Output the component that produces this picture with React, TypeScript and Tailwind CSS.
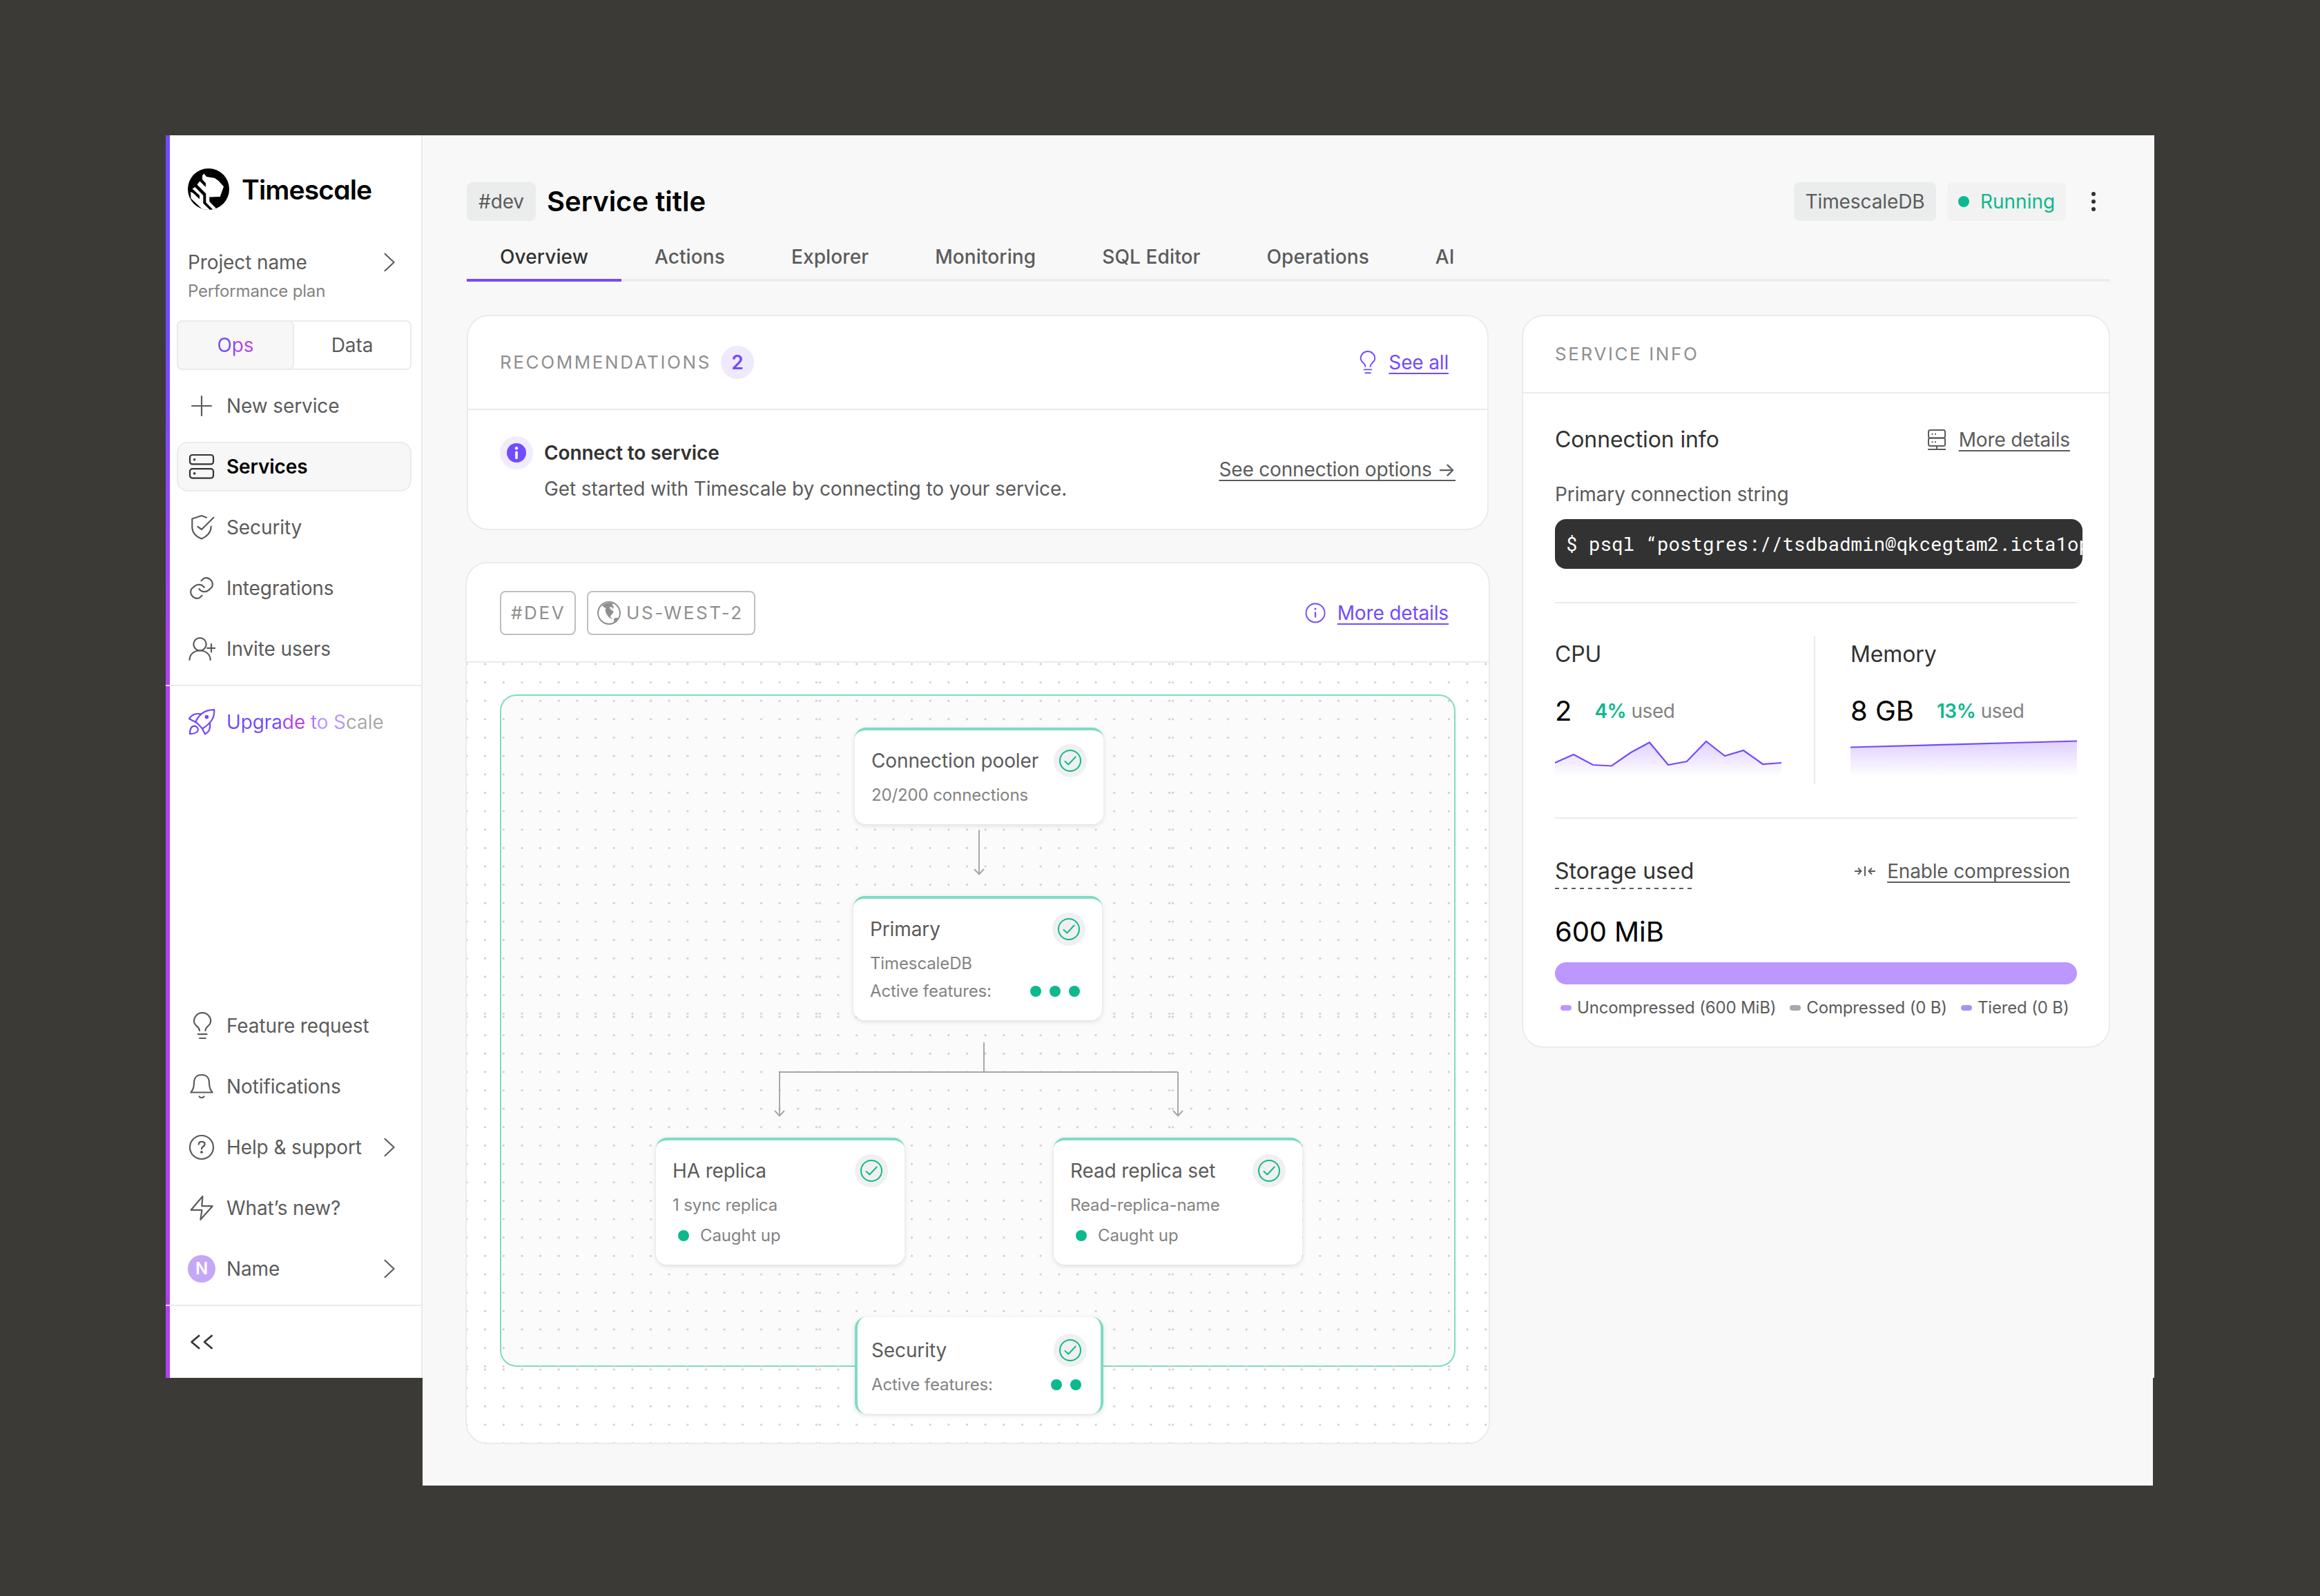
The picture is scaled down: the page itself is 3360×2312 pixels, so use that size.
import React from 'react'

type IconProps = { className?: string }

const Svg: React.FC<{ className?: string; children: React.ReactNode }> = ({ className = 'h-10 w-10', children }) => (
  <svg
    viewBox="0 0 40 40"
    fill="none"
    stroke="currentColor"
    strokeWidth={2.2}
    strokeLinecap="round"
    strokeLinejoin="round"
    className={`shrink-0 ${className}`}
  >
    {children}
  </svg>
)

const PlusIcon = () => (
  <Svg>
    <path d="M6 20h28M20 6v28" />
  </Svg>
)

const ServerIcon = () => (
  <Svg className="h-10 w-10 text-[#333333]">
    <rect x="3" y="3" width="34" height="13.4" rx="3.5" />
    <rect x="3" y="23.2" width="34" height="13.4" rx="3.5" />
    <circle cx="9.6" cy="9.7" r="0.7" />
    <circle cx="9.6" cy="29.9" r="0.7" />
  </Svg>
)

const ShieldIcon = () => (
  <Svg>
    <path d="M27 5.7L20 3 6.3 7.5V19c0 8.5 6 14.5 13.7 17.5C27.7 33.5 33.7 27 33.7 18.500" />
    <path d="M14.5 19l5.5 4L37.3 5.7" />
  </Svg>
)

const LinkIcon = () => (
  <Svg>
    <path d="M19.5 9.3L23 6A9.3 9.3 0 0 1 34.8 18.7L30.5 22.6A9.4 9.4 0 0 1 16.3 21.2" />
    <path d="M19.5 9.3L23 6A9.3 9.3 0 0 1 34.8 18.7L30.5 22.6A9.4 9.4 0 0 1 16.3 21.2" transform="rotate(180 20 20)" />
  </Svg>
)

const UserPlusIcon = () => (
  <Svg>
    <circle cx="17.5" cy="13.3" r="9.2" />
    <path d="M2.5 36C2.5 28 9 22.5 17.5 22.5S32.7 28 32.7 36" />
    <path d="M34 13v11.5M28.2 18.8h11" />
  </Svg>
)

const RocketIcon = () => (
  <Svg className="h-10 w-10 text-[#7148fb]">
    <path d="M11.3 19.3C15 12.5 21 2.2 38.3 2.2C38.8 13 34.5 21 21.2 29.5Z" />
    <path d="M2 15.2L12 20.5M2 15.2C6.5 8.5 11.5 7.2 19.7 8.4" />
    <path d="M20.8 29.3L25 37.5C31.8 34 33.2 28.5 32 21" />
    <circle cx="27.4" cy="12.6" r="1.7" fill="currentColor" />
    <path d="M3 37.2C3 30 4.8 25.6 9.8 25.6C12.4 26.2 14.8 28.5 15 31C14.5 35.6 10 37 3 37.2Z" />
  </Svg>
)

const BulbIcon: React.FC<IconProps> = ({ className }) => (
  <Svg className={className}>
    <path d="M17 27C17 20.5 9 20.5 9 13.2A12.1 12 0 0 1 33.2 13.2C33.2 20.5 25.4 20.5 25.4 27" />
    <path d="M14.8 32.2h12.8M17 38h8.6" />
  </Svg>
)

const BellIcon = () => (
  <Svg>
    <path d="M4.3 28.5C8.2 24.5 9 20 9 14.5C9 7 13.5 3 20 3S31 7 31 14.5C31 20 31.8 24.5 35.7 28.5Z" />
    <path d="M16.5 34.3c1.8 2.6 5.2 2.6 7 0" />
  </Svg>
)

const HelpIcon = () => (
  <Svg>
    <circle cx="20" cy="20" r="17" />
    <path d="M15.8 15.5C16 10.8 24.6 10.6 24.6 15.6C24.6 18.8 20 18.7 20 22.2" strokeWidth={2.4} />
    <circle cx="20" cy="27" r="0.9" fill="currentColor" />
  </Svg>
)

const BoltIcon = () => (
  <Svg>
    <path d="M21.4 3L4.7 22.8H20.4L18.4 36.8L35.7 17.2H20.3Z" />
  </Svg>
)

const CollapseIcon = () => (
  <Svg className="h-10 w-10 text-[#333333]">
    <path d="M17 10.2L5.5 20L17 29.8M35.5 10.2L24 20L35.5 29.8" strokeWidth={2.6} strokeLinecap="butt" />
  </Svg>
)

const ChevronIcon: React.FC<IconProps> = ({ className = '' }) => (
  <svg
    viewBox="0 0 16 28"
    fill="none"
    stroke="currentColor"
    strokeWidth={2.1}
    strokeLinecap="round"
    strokeLinejoin="round"
    className={`ml-auto h-7 w-4 ${className}`}
  >
    <path d="M1.5 1.8L14.6 14L1.5 26.2" />
  </svg>
)

const Logo = () => (
  <svg viewBox="0 0 60 60" className="h-[60px] w-[60px]">
    <defs>
      <clipPath id="logo-clip">
        <circle cx="30" cy="30" r="30" />
      </clipPath>
    </defs>
    <g clipPath="url(#logo-clip)">
      <rect width="60" height="60" fill="#000" />
      <path
        fill="#fff"
        d="M21 10.5L23.3 7.6L27 12L39 14L44.5 18L52 26.3L46.7 41L31.3 41.6V48L43 60H36.7L26.3 49.3V36.5L13.5 23.5L17.3 18.5L26 27V21.5L21 16Z"
      />
      <path fill="#fff" d="M10.5 27L22.3 39V50.5L33 61H23L4.5 43.5L4 34L7.5 35.5L17 44.5V39L6.5 29.5Z" />
    </g>
  </svg>
)

const GlobeIcon = () => (
  <svg viewBox="0 0 34 34" className="h-[34px] w-[34px] text-[#8f8f8f]">
    <circle cx="17" cy="17" r="15.9" fill="none" stroke="currentColor" strokeWidth={2} />
    <path
      fill="currentColor"
      d="M7 6C11 2.5 18 1 23.5 3.2L21.5 5L24 8L22.5 11L20.5 8L17.5 9L19.5 12L22.5 13.5L23.5 16L21.5 18.5L19 21.5L20 24L22.500 25L20.500 25.5L16.5 23L13 18L11.5 13L12.5 10L9.500 8.5Z"
    />
    <path fill="currentColor" d="M23.5 26L27 23.5L31 25L27 30L23 32L24.5 28.5Z" />
  </svg>
)

const InfoCircleIcon = () => (
  <svg viewBox="0 0 32 32" fill="none" stroke="currentColor" strokeWidth={1.9} className="h-8 w-8">
    <circle cx="16" cy="16" r="13.5" />
    <path d="M16 14.5v8" strokeWidth={2.2} />
    <circle cx="16" cy="10" r="1.5" fill="currentColor" stroke="none" />
  </svg>
)

const HostIcon = () => (
  <svg viewBox="0 0 28 32" fill="none" stroke="currentColor" strokeWidth={2} className="h-8 w-7">
    <rect x="2" y="2" width="24" height="11.5" rx="2.5" />
    <rect x="2" y="13.5" width="24" height="11.5" rx="2.5" />
    <path d="M14 25v5M1 30h26" />
    <path d="M6.5 7.7h2M11 7.7h2M6.5 19.2h2M11 19.2h2" />
  </svg>
)

const CompressIcon = () => (
  <svg viewBox="0 0 32 16" fill="none" stroke="currentColor" strokeWidth={2} className="h-4 w-8">
    <path d="M1 8h9M6 3.5L10.5 8L6 12.5M16 1v14M31 8h-9M26 3.5L21.5 8L26 12.5" />
  </svg>
)

const StatusCheck = () => (
  <div className="flex h-12 w-12 items-center justify-center rounded-full bg-[#f0f0f0]">
    <svg viewBox="0 0 32 32" fill="none" stroke="#0cb98d" className="h-8 w-8">
      <circle cx="16" cy="16" r="15" strokeWidth={2} />
      <path d="M8.5 17L13.4 21.5L23.7 10.5" strokeWidth={1.9} strokeLinecap="round" strokeLinejoin="round" />
    </svg>
  </div>
)

const Dot = () => <span className="h-4 w-4 rounded-full bg-[#0cb98d]" />

interface NavItemProps {
  icon: React.ReactNode
  label: string
  active?: boolean
  hasMenu?: boolean
}

const NavItem: React.FC<NavItemProps> = ({ icon, label, active, hasMenu }) => (
  <div
    className={`flex h-[72px] items-center gap-4 pl-[14px] ${
      active ? 'rounded-2xl border-2 border-[#ebebeb] bg-[#f7f7f7] font-semibold text-black' : 'border-2 border-transparent text-[#5b5b5b]'
    }`}
  >
    {icon}
    <span>{label}</span>
    {hasMenu && <ChevronIcon className="mr-[22px]" />}
  </div>
)

const Sidebar = () => (
  <aside className="h-[1800px] w-[372px] shrink-0 bg-[linear-gradient(180deg,#724bff_0px,#724bff_300px,#b143ee_790px,#b143ee_100%)] pl-1.5">
    <div className="flex h-full flex-col border-r-2 border-[#ebebeb] bg-white pt-12">
      <div className="flex h-[60px] items-center gap-[18px] pl-[26px]">
        <Logo />
        <span className="text-[39px] font-semibold tracking-[-0.85px] text-black [font-feature-settings:'cv11']">Timescale</span>
      </div>

      <div className="mt-14 flex h-10 items-center pl-[26px] pr-[14px] text-[#5b5b5b]">
        Project name
        <ChevronIcon className="mr-6" />
      </div>
      <div className="flex h-11 items-center pl-[26px] text-2xl tracking-[-0.17px] text-[#838383]">Performance plan</div>

      <div className="ml-[10px] mr-[14px] mt-5 flex h-[72px] rounded-lg border-2 border-[#ebebeb]">
        <div className="-my-0.5 -ml-0.5 flex w-[170px] items-center justify-center rounded-lg border-2 border-[#ebebeb] bg-[#f7f7f7]">
          <span className="bg-[linear-gradient(90deg,#724bff_35%,#b143ee_60%)] bg-clip-text leading-10 text-transparent">Ops</span>
        </div>
        <div className="flex flex-1 items-center justify-center text-[#5b5b5b]">Data</div>
      </div>

      <nav className="ml-[10px] mr-[14px] mt-4 flex flex-col gap-4">
        <NavItem icon={<PlusIcon />} label="New service" />
        <NavItem icon={<ServerIcon />} label="Services" active />
        <NavItem icon={<ShieldIcon />} label="Security" />
        <NavItem icon={<LinkIcon />} label="Integrations" />
        <NavItem icon={<UserPlusIcon />} label="Invite users" />
      </nav>

      <div className="-ml-1.5 mt-4 h-0.5 shrink-0 bg-[#ebebeb]" />

      <div className="ml-[10px] mt-4 flex h-[72px] items-center gap-4 pl-4">
        <RocketIcon />
        <span className="bg-[linear-gradient(90deg,#724bff_33%,#b143ee_39%,#b143ee_48%,#bb97ff_60%,#bb97ff_73%,#aaa7a8_77%)] bg-clip-text leading-10 text-transparent">
          Upgrade to Scale
        </span>
      </div>

      <nav className="ml-[10px] mr-[14px] mt-auto flex flex-col gap-4">
        <NavItem icon={<BulbIcon />} label="Feature request" />
        <NavItem icon={<BellIcon />} label="Notifications" />
        <NavItem icon={<HelpIcon />} label="Help & support" hasMenu />
        <NavItem icon={<BoltIcon />} label="What’s new?" />
        <NavItem
          icon={
            <div className="flex h-10 w-10 items-center justify-center rounded-full bg-[#c4a8f7] text-2xl font-semibold text-white">
              N
            </div>
          }
          label="Name"
          hasMenu
        />
      </nav>

      <div className="-ml-1.5 mt-4 h-0.5 shrink-0 bg-[#ebebeb]" />
      <div className="flex h-[104px] shrink-0 items-center pl-[26px]">
        <CollapseIcon />
      </div>
    </div>
  </aside>
)

const tabs = ['Overview', 'Actions', 'Explorer', 'Monitoring', 'SQL Editor', 'Operations', 'AI']

const Header = () => (
  <>
    <div className="flex h-14 items-center">
      <div className="flex h-14 w-[100px] items-center justify-center rounded-lg bg-[#ebeded] text-[#5b5b5b]">#dev</div>
      <h1 className="ml-4 text-[40px] font-semibold tracking-normal text-black">Service title</h1>
      <div className="ml-auto flex h-14 w-[206px] items-center justify-center rounded-lg bg-[#ebeded] text-[#5b5b5b]">TimescaleDB</div>
      <div className="ml-4 flex h-14 w-[172px] items-center gap-4 rounded-lg bg-[#f2f2f2] pl-4 tracking-normal text-[#0cb98d]">
        <Dot />
        Running
      </div>
      <div className="ml-[37px] mr-[21px] flex flex-col gap-[5px]">
        <span className="h-1.5 w-1.5 rounded-full bg-[#323232]" />
        <span className="h-1.5 w-1.5 rounded-full bg-[#323232]" />
        <span className="h-1.5 w-1.5 rounded-full bg-[#323232]" />
      </div>
    </div>
    <div className="mt-5 flex h-[68px] border-b-4 border-[#ebeded]">
      {tabs.map((tab, i) => (
        <div
          key={tab}
          className={`flex h-[68px] items-center border-b-4 px-12 font-medium tracking-[0.11px] ${
            i === 0 ? 'border-[#724bff] text-[#323232]' : 'border-transparent text-[#5b5b5b]'
          }`}
        >
          {tab}
        </div>
      ))}
    </div>
  </>
)

const TextLink: React.FC<{ children: React.ReactNode }> = ({ children }) => (
  <span className="tracking-[-0.16px] underline decoration-2 underline-offset-[5px] [text-decoration-skip-ink:none]">{children}</span>
)

const Recommendations = () => (
  <section className="h-[312px] rounded-[32px] border-2 border-[#ebebeb] bg-white">
    <div className="flex h-[136px] items-center border-b-2 border-[#ebebeb] pl-[46px] pr-[56px]">
      <span className="text-[26px] tracking-[2.6px] text-[#8f8f8f]">RECOMMENDATIONS</span>
      <span className="ml-[14px] flex h-12 w-12 items-center justify-center rounded-full bg-[#efe9fd] font-semibold text-[#724bff]">2</span>
      <div className="ml-auto flex items-center gap-[14px] text-[#724bff]">
        <BulbIcon className="h-[34px] w-[34px]" />
        <TextLink>See all</TextLink>
      </div>
    </div>
    <div className="flex pl-[46px] pr-[46px] pt-[38px]">
      <div className="flex h-12 w-12 items-center justify-center rounded-full bg-[#f1ecfd]">
        <svg viewBox="0 0 28 28" className="h-7 w-7">
          <circle cx="14" cy="14" r="14" fill="#724bff" />
          <circle cx="14" cy="7.2" r="2.2" fill="#fff" />
          <rect x="12.2" y="11.5" width="3.6" height="11.5" rx="1.5" fill="#fff" />
        </svg>
      </div>
      <div className="ml-4">
        <div className="flex h-12 items-center font-semibold text-[#323232]">Connect to service</div>
        <div className="mt-1 flex h-12 items-center text-[#5b5b5b]">
          Get started with Timescale by connecting to your service.
        </div>
      </div>
      <div className="ml-auto mt-6 flex h-12 items-center text-[#5b5b5b]">
        <TextLink>See connection options →</TextLink>
      </div>
    </div>
  </section>
)

interface NodeProps {
  title: string
  className: string
  children: React.ReactNode
}

const ServiceNode: React.FC<NodeProps> = ({ title, className, children }) => (
  <div
    className={`absolute w-[360px] rounded-2xl border-[#7edbc3] bg-white text-2xl tracking-[-0.12px] text-[#838383] shadow-[0_2px_7px_rgba(0,0,0,0.13)] ${className}`}
  >
    <div className="flex h-12 items-center justify-between text-[28px] text-[#5b5b5b]">
      <span className="pt-0.5">{title}</span>
      <StatusCheck />
    </div>
    {children}
  </div>
)

// dots repeat inside a 511px tile, 20 per side
const DotGrid = () => (
  <svg className="absolute inset-0 h-full w-full">
    <defs>
      <pattern id="grid-tile" x="-2" y="0" width="511.3" height="511" patternUnits="userSpaceOnUse">
        {Array.from({ length: 20 }, (_, r) =>
          Array.from({ length: 20 }, (_, c) => (
            <circle key={`${r}-${c}`} cx={2 + c * 26.65} cy={1.9 + r * 26.65} r="1.6" fill="#cfcfcf" />
          ))
        )}
      </pattern>
    </defs>
    <rect width="100%" height="100%" fill="url(#grid-tile)" />
  </svg>
)

const Connectors = () => (
  <svg viewBox="0 0 1480 1130" fill="none" stroke="#aaa7a8" strokeWidth={2} className="absolute inset-0 h-full w-full">
    <path d="M742 242v64M735 299l7 7.5l7-7.5" />
    <path d="M749 550v43M452 593h578M453 593v63M446 649l7 7.5l7-7.5M1030 593v63M1023 649l7 7.5l7-7.5" />
  </svg>
)

const Topology = () => (
  <section className="-mx-0.5 mt-[46px] h-[1278px] overflow-hidden rounded-[32px] border-2 border-[#ebebeb] bg-white">
    <div className="flex h-36 items-center border-b-2 border-[#ebebeb] pl-12 pr-[58px] pt-0.5 text-[26px] tracking-[2.6px] text-[#8f8f8f]">
      <div className="flex h-16 w-[110px] items-center rounded-lg border-2 border-[#bfbfbf] pl-[14px]">#DEV</div>
      <div className="ml-4 flex h-16 w-[244px] items-center gap-2 rounded-lg border-2 border-[#bfbfbf] pl-[13px]">
        <GlobeIcon />
        US-WEST-2
      </div>
      <div className="ml-auto flex items-center gap-4 text-[28px] text-[#724bff]">
        <InfoCircleIcon />
        <TextLink>More details</TextLink>
      </div>
    </div>
    <div className="relative h-[1130px]">
      <div className="absolute left-12 top-[46px] h-[974px] w-[1384px] rounded-3xl border-2 border-[#7edbc3] bg-[#fbfbfb]" />
      <DotGrid />
      <Connectors />

      <ServiceNode title="Connection pooler" className="left-[562px] top-[94px] h-[140px] border-t-4 px-6 pt-5">
        <div className="mt-1.5 flex h-10 items-center">20/200 connections</div>
      </ServiceNode>

      <ServiceNode title="Primary" className="left-[560px] top-[338px] h-[180px] border-t-4 px-6 pt-5">
        <div className="mt-1.5 flex h-10 items-center">TimescaleDB</div>
        <div className="flex h-10 items-center justify-between pr-2">
          Active features:
          <span className="flex gap-3">
            <Dot />
            <Dot />
            <Dot />
          </span>
        </div>
      </ServiceNode>

      <ServiceNode title="HA replica" className="left-[274px] top-[688px] h-[184px] border-t-4 px-6 pt-5">
        <div className="mt-1 flex h-11 items-center">1 sync replica</div>
        <div className="flex h-11 items-center gap-4 pl-2">
          <Dot />
          Caught up
        </div>
      </ServiceNode>

      <ServiceNode title="Read replica set" className="left-[850px] top-[688px] h-[184px] border-t-4 px-6 pt-5">
        <div className="mt-1 flex h-11 items-center">Read-replica-name</div>
        <div className="flex h-11 items-center gap-4 pl-2">
          <Dot />
          Caught up
        </div>
      </ServiceNode>

      <ServiceNode title="Security" className="left-[562px] top-[948px] h-[140px] border-x-4 px-5 pt-6">
        <div className="mt-1.5 flex h-10 items-center justify-between pr-2">
          Active features:
          <span className="flex gap-3">
            <Dot />
            <Dot />
          </span>
        </div>
      </ServiceNode>
    </div>
  </section>
)

interface SparkProps {
  id: string
  points: number[][]
}

const Sparkline: React.FC<SparkProps> = ({ id, points }) => {
  const line = points.map(([x, y]) => `${x} ${y}`).join('L')
  return (
    <svg viewBox="0 0 328 58" className="mt-3.5 h-[58px] w-[328px]">
      <defs>
        <linearGradient id={id} x1="0" y1="0" x2="0" y2="1">
          <stop offset="0" stopColor="#bb97ff" stopOpacity="0.45" />
          <stop offset="1" stopColor="#bb97ff" stopOpacity="0" />
        </linearGradient>
      </defs>
      <path d={`M${line}L328 54L0 54Z`} fill={`url(#${id})`} />
      <path d={`M${line}`} fill="none" stroke="#724bff" strokeWidth={2.2} />
    </svg>
  )
}

const cpuPoints = [
  [0, 34], [27, 22], [55, 37], [82, 38.5], [110, 19], [137, 4.5], [164, 37], [191, 32], [219, 3],
  [246, 24], [273, 16], [301, 36], [328, 34]
]

const memoryPoints = [[0, 11.5], [328, 2.5]]

interface UsageProps {
  title: string
  value: string
  percent: string
  chart: React.ReactNode
}

const Usage: React.FC<UsageProps> = ({ title, value, percent, chart }) => (
  <div className="w-[328px]">
    <div className="flex h-[50px] items-center pt-0.5 text-[32px] text-[#323232]">{title}</div>
    <div className="mt-[29px] flex h-14 items-center pt-0.5">
      <span className="text-[40px] tracking-normal text-black">{value}</span>
      <span className="ml-[33px] tracking-[-0.5px] text-[#838383]">
        <span className="font-semibold text-[#0cb98d]">{percent}</span> used
      </span>
    </div>
    {chart}
  </div>
)

const legend = [
  { label: 'Uncompressed (600 MiB)', color: 'bg-[#bb97ff]' },
  { label: 'Compressed (0 B)', color: 'bg-[#aaa7a8]' },
  { label: 'Tiered (0 B)', color: 'bg-[#9d98ef]' }
]

const ServiceInfo = () => (
  <section className="h-[1062px] w-[852px] shrink-0 rounded-[32px] border-2 border-[#ebebeb] bg-white">
    <div className="flex h-28 items-center border-b-2 border-[#ebebeb] pl-[46px] text-[26px] tracking-[2.6px] text-[#8f8f8f]">
      SERVICE INFO
    </div>
    <div className="pl-[46px] pr-[46px]">
      <div className="mt-[35px] flex h-16 items-center pr-[10px]">
        <span className="text-[32px] text-[#323232]">Connection info</span>
        <div className="ml-auto flex items-center gap-[18px] text-[#5b5b5b]">
          <HostIcon />
          <TextLink>More details</TextLink>
        </div>
      </div>
      <div className="mt-[27px] flex h-10 items-center text-[#5b5b5b]">Primary connection string</div>
      <div className="mt-4 flex h-[72px] w-[764px] items-center overflow-hidden whitespace-pre rounded-2xl bg-[#323232] pl-4 font-['Roboto_Mono','Noto_Sans_Mono','Liberation_Mono',monospace] text-[27.5px] tracking-normal text-white">
        $ psql “postgres://tsdbadmin@qkcegtam2.icta1op
      </div>
      <div className="mt-12 h-0.5 bg-[#ebebeb]" />
      <div className="mt-12 flex h-[214px]">
        <Usage title="CPU" value="2" percent="4%" chart={<Sparkline id="cpu-fill" points={cpuPoints} />} />
        <div className="ml-[47px] mr-[51px] w-0.5 bg-[#ebebeb]" />
        <Usage title="Memory" value="8 GB" percent="13%" chart={<Sparkline id="memory-fill" points={memoryPoints} />} />
      </div>
      <div className="mt-12 h-0.5 bg-[#ebebeb]" />
      <div className="mt-[49px] flex h-[53px] pr-[10px]">
        <div className="w-[202px]">
          <div className="flex h-[51px] items-center pt-0.5 text-[32px] tracking-normal text-[#323232]">Storage used</div>
          <div className="h-0.5 bg-[repeating-linear-gradient(90deg,#5b5b5b_0_6px,transparent_6px_12px)]" />
        </div>
        <div className="ml-auto flex h-[53px] items-center gap-4 text-[#5b5b5b]">
          <CompressIcon />
          <TextLink>Enable compression</TextLink>
        </div>
      </div>
      <div className="mt-9 flex h-[50px] items-center pt-0.5 text-[40px] text-black">600 MiB</div>
      <div className="mt-5 h-8 rounded-2xl bg-[#bb97ff]" />
      <div className="flex h-[66px] items-center pl-2 pt-0.5 text-2xl tracking-[-0.16px] text-[#5b5b5b]">
        {legend.map(item => (
          <div key={item.label} className="mr-5 flex items-center gap-2 whitespace-nowrap">
            <span className={`h-2 w-4 rounded-full ${item.color}`} />
            {item.label}
          </div>
        ))}
      </div>
    </div>
  </section>
)

export default function App() {
  return (
    <div className="h-[2312px] w-[3360px] overflow-hidden bg-[#3b3a37] pl-60 pt-[196px] font-['Inter',sans-serif] text-[28px] leading-none tracking-[-0.11px] [font-optical-sizing:none]">
      <div className="flex h-[1800px] w-[2880px] items-start bg-white">
        <Sidebar />
        <main className="h-[1956px] w-[2506px] shrink-0 bg-[#f8f8f8] pl-16 pr-[62px] pt-[68px]">
          <Header />
          <div className="mt-12 flex items-start gap-12">
            <div className="w-[1480px] shrink-0">
              <Recommendations />
              <Topology />
            </div>
            <ServiceInfo />
          </div>
        </main>
      </div>
    </div>
  )
}
